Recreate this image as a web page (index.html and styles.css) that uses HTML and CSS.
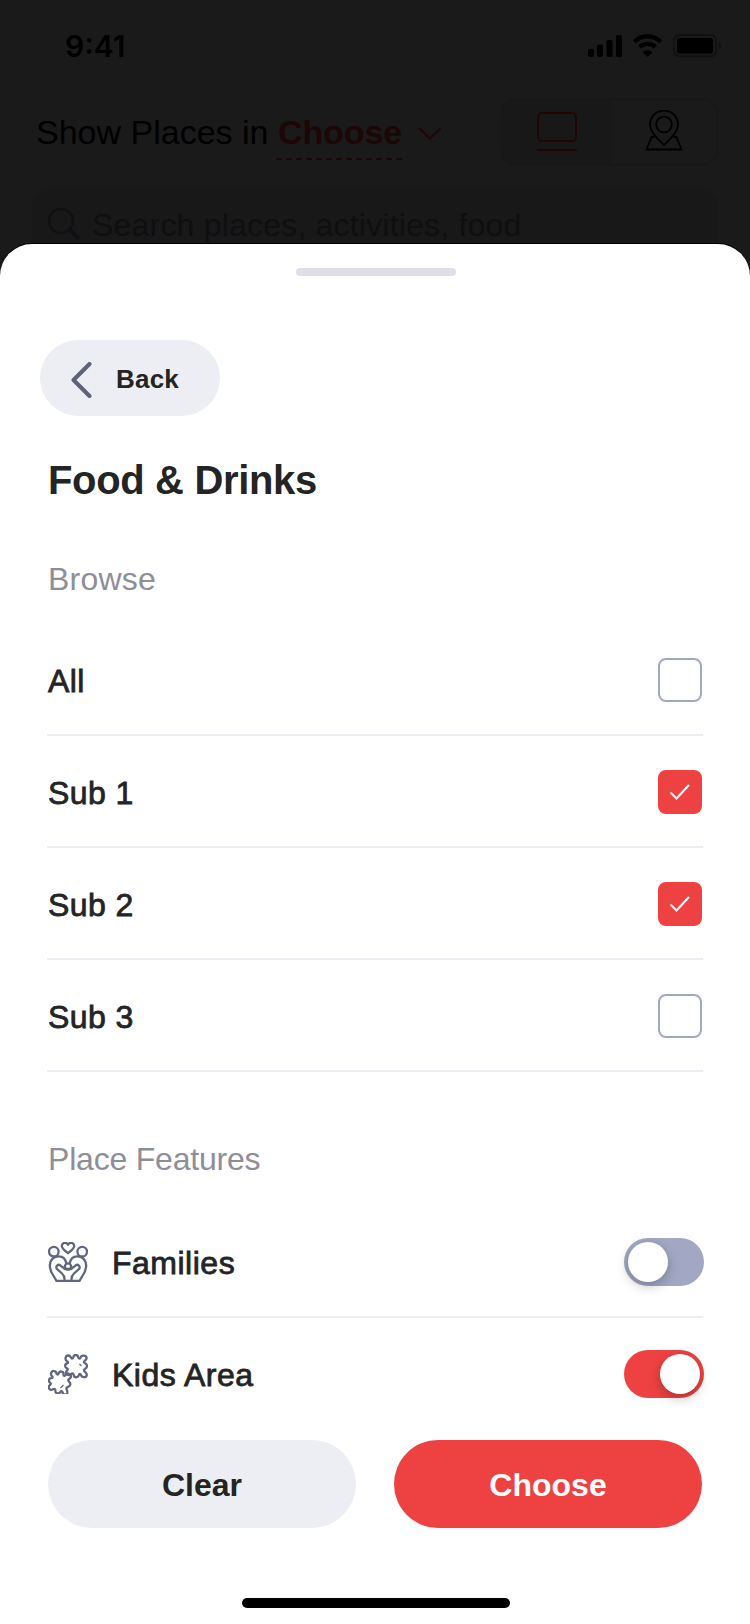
FILE: index.html
```html
<!DOCTYPE html>
<html lang="en">
<head>
<meta charset="utf-8">
<title>Food &amp; Drinks filter</title>
<link rel="stylesheet" href="styles.css">
</head>
<body>
<div class="phone">
  <header class="backdrop">
    <div class="status">
      <span class="clock">9:41</span>
      <svg class="status-icons" width="134" height="24" viewBox="0 0 134 24">
        <rect x="0" y="15" width="6" height="8" rx="1.8"/>
        <rect x="9" y="10.500" width="6" height="12.500" rx="1.800"/>
        <rect x="18.500" y="6" width="6" height="17" rx="1.800"/>
        <rect x="28" y="1" width="6" height="22" rx="1.800"/>
        <path d="M46.300 9.700a19 19 0 0 1 26.400 0M51.600 15a11.500 11.500 0 0 1 15.800 0" fill="none" stroke="#000" stroke-width="4.200" transform="translate(0 -2)"/>
        <path d="M59.500 23l-5-4.800a7.600 7.600 0 0 1 10 0z"/>
        <rect x="86" y="1" width="42" height="21.500" rx="5.500" fill="none" stroke="#111" stroke-width="2"/>
        <rect x="89" y="4" width="36" height="15.500" rx="2.500"/>
        <path d="M130.500 8c3.500 1 3.500 6.500 0 7.500z" fill="#111"/>
      </svg>
    </div>
    <div class="place-bar">
      <span class="place-text">Show Places in</span>
      <span class="place-choice">Choose
        <svg class="dashes" width="127" height="2" viewBox="0 0 127 2"><path d="M0 1h127" stroke="#1f0606" stroke-width="2" stroke-dasharray="6 4"/></svg>
      </span>
      <svg class="caret" width="24" height="14" viewBox="0 0 24 14"><path d="M2 2l10 9.500L22 2" fill="none" stroke="#1f0606" stroke-width="2" stroke-linecap="round"/></svg>
      <div class="view-switch">
        <div class="view-half view-active">
          <svg width="42" height="42" viewBox="0 0 42 42" fill="none" stroke="#1f0606" stroke-width="2"><rect x="2" y="3" width="38" height="28" rx="4"/><path d="M1 40h40"/></svg>
        </div>
        <div class="view-half">
          <svg width="38" height="42" viewBox="0 0 38 42" fill="none" stroke="#000" stroke-width="1.800"><path d="M19 35C14 29.500 5 23 5 14.500a14 14 0 0 1 28 0C33 23 24 29.500 19 35z"/><circle cx="19" cy="14.500" r="7.800"/><path d="M9.500 27H6.500L1.500 39.500h35L31.500 27h-3"/></svg>
        </div>
      </div>
    </div>
    <div class="search">
      <svg width="32" height="32" viewBox="0 0 32 32" fill="none" stroke="#0f1013"><circle cx="13" cy="13" r="12" stroke-width="2.400"/><path d="M21.500 21.500l8 8" stroke-width="4" stroke-linecap="round"/></svg>
      <span>Search places, activities, food</span>
    </div>
  </header>

  <main class="sheet">
    <div class="handle"></div>
    <div class="back">
      <svg width="22" height="36" viewBox="0 0 22 36"><path d="M18.500 2L2.500 18l16 16" fill="none" stroke="#5d6279" stroke-width="4" stroke-linecap="round" stroke-linejoin="round"/></svg>
      <span>Back</span>
    </div>
    <h1 class="title">Food &amp; Drinks</h1>
    <h2 class="label browse">Browse</h2>
    <div class="list">
      <div class="row"><span class="name">All</span><span class="box"></span></div>
      <div class="row"><span class="name">Sub 1</span><span class="box checked"><svg width="22" height="18" viewBox="0 0 22 18"><path d="M1.500 9.500l6 6L20 2" fill="none" stroke="#fff" stroke-width="2"/></svg></span></div>
      <div class="row"><span class="name">Sub 2</span><span class="box checked"><svg width="22" height="18" viewBox="0 0 22 18"><path d="M1.500 9.500l6 6L20 2" fill="none" stroke="#fff" stroke-width="2"/></svg></span></div>
      <div class="row"><span class="name">Sub 3</span><span class="box"></span></div>
    </div>
    <h2 class="label features">Place Features</h2>
    <div class="list">
      <div class="row feature">
        <svg class="icon" width="40" height="40" viewBox="0 0 40 40">
          <circle cx="5.800" cy="9.700" r="4.800"/><circle cx="34.200" cy="9.700" r="4.800"/>
          <path d="M20 11.200C16.500 8.500 13.800 6.500 13.800 4c0-3.600 4.800-4.300 6.200-1.200 1.400-3.100 6.200-2.400 6.200 1.200 0 2.500-2.700 4.500-6.200 7.200z"/>
          <path d="M18.300 21.500C17.500 17 14.500 14.300 11 14.300c-5.500 0-9.200 4-9.200 9 0 2.500.7 4.500 1.500 6.700L8.500 39h23l5.200-9c.8-2.200 1.500-4.200 1.500-6.700 0-5-3.700-9-9.200-9-3.500 0-6.500 2.700-7.300 7.200"/>
          <circle cx="20" cy="24.500" r="3.100"/>
          <path d="M16.500 39v-2c0-3-1-4.200-2.500-5.500l-5-4.500c-1.800-2.500.8-5.200 3.200-3.700L17 27h6l4.800-3.700c2.400-1.500 5 1.200 3.200 3.700l-5 4.500c-1.500 1.300-2.500 2.500-2.500 5.500v2"/>
        </svg>
        <span class="name">Families</span>
        <span class="toggle"><span class="knob"></span></span>
      </div>
      <div class="row feature">
        <svg class="icon" width="40" height="40" viewBox="0 0 40 40">
          <path d="M22.800 3.200C23.500 5.200 25 5.200 25.300 3.200C25.500 .300 30 .300 30.200 3.200C30.500 5.200 32 5.200 32.700 3.200C33.500 .600 39 1.200 38.500 4.500C38.300 6.300 36 6.500 36 8C36 9.500 39 9.200 39 12C39 14.800 36 14.500 36 16.200C36 17.800 39 18.500 38.800 20.800C38.500 24 34 23.800 33.200 21.500C32.600 19.500 31.300 19.500 30.800 21.300C30 24 26.200 23.800 25.800 21.300C25.500 19.500 24.500 19 23.200 20C20.500 22.500 16.800 20 18.500 17.200C19.800 15.500 20.500 15.200 19 14.300C16.500 13.500 16.500 10 19 9.500C20.800 9 20.300 7.800 18.800 7C16.500 5.500 17.500 1.200 20.500 1.500C22.200 1.800 22 2.400 22.800 3.200z"/>
          <path transform="translate(-16.500 16.500) rotate(12 28.500 12)" d="M22.800 3.200C23.500 5.200 25 5.200 25.300 3.200C25.500 .300 30 .300 30.200 3.200C30.500 5.200 32 5.200 32.700 3.200C33.500 .600 38 1.200 38 4.500C37.800 6.300 36 6.500 36 8C36 9.500 39 9.200 39 12C39 14.800 36 14.500 36 16.200C36 17.800 38 18.500 37.800 20.800C37.500 23.500 34 23.200 33.200 21.500C32.600 19.500 31.300 19.500 30.800 21.300C30 24 26.200 23.800 25.800 21.300C25.500 19.500 24.500 19 23.200 20C20.500 22.500 17.500 20 18.700 17.200C19.800 15.500 20.500 15.200 19 14.300C16.500 13.500 16.500 10 19 9.500C20.800 9 20.300 7.800 18.800 7C17 5.500 18 1.700 20.500 2C22.200 2 22 2.400 22.800 3.200z"/>
          <path d="M31.500 10l2 2M12.500 34l3-3" stroke-width="1.200"/>
        </svg>
        <span class="name">Kids Area</span>
        <span class="toggle on"><span class="knob"></span></span>
      </div>
    </div>
    <div class="actions">
      <div class="btn">Clear</div>
      <div class="btn primary">Choose</div>
    </div>
    <div class="home"></div>
  </main>
</div>
</body>
</html>
```
FILE: styles.css
```css
* { box-sizing: border-box; }
body { margin: 0; background: #1a1a1a; }
svg { display: block; flex: none; }
.phone {
  width: 750px;
  height: 1624px;
  overflow: hidden;
  display: flex;
  flex-direction: column;
  background: #1a1a1a;
  font-family: "Liberation Sans", Arial, sans-serif;
  color: #242424;
}
.backdrop { height: 244px; flex: none; overflow: hidden; color: #000; }
.status {
  height: 98px;
  padding: 34px 28px 0 65px;
  display: flex;
  justify-content: space-between;
}
.clock {
  font: 600 30px/24px Inter, sans-serif;
  letter-spacing: 0;
}
.place-bar {
  height: 68px;
  padding: 0 32px 0 36px;
  display: flex;
  align-items: center;
  font-size: 34px;
  line-height: 68px;
}
.place-text { width: 242px; white-space: nowrap; }
.place-choice { position: relative; width: 125px; font-weight: 700; color: #1c0606; letter-spacing: -0.1px; }
.dashes { position: absolute; left: -2px; top: 60px; }
.caret { margin: 4px 0 0 15px; }
.view-switch {
  margin-left: auto;
  width: 218px;
  height: 68px;
  display: flex;
  border: 2px solid #181818;
  border-radius: 16px;
  overflow: hidden;
}
.view-half { flex: 1; display: flex; align-items: center; justify-content: center; padding-bottom: 2px; }
.view-active { background: #181818; flex: 0 0 110px; }
.search {
  margin: 22px 32px 0;
  height: 80px;
  padding: 20px 0 0 16px;
  display: flex;
  gap: 12px;
  background: #181818;
  border-radius: 20px;
  font-size: 32px;
  line-height: 34px;
  letter-spacing: 0.2px;
  color: #0e0f11;
}
.sheet {
  flex: 1;
  display: flex;
  flex-direction: column;
  background: #fff;
  border-radius: 32px 32px 0 0;
  box-shadow: 0 -1px 0 #000;
}
.handle {
  width: 160px;
  height: 8px;
  margin: 24px 0 0 296px;
  border-radius: 4px;
  background: #dfdfe8;
  flex: none;
}
.back {
  width: 180px;
  height: 76px;
  margin: 64px 0 0 40px;
  padding: 4px 0 0 31px;
  display: flex;
  align-items: center;
  gap: 23px;
  border-radius: 38px;
  background: #edeef4;
  font-size: 26px;
  font-weight: 700;
  line-height: 32px;
  flex: none;
}
.back span { margin-top: -4px; line-height: 34px; padding-top: 2px; letter-spacing: 0.2px; }
.title { margin: 40px 0 0 48px; font-size: 40px; line-height: 48px; height: 48px; letter-spacing: -0.35px; }
.label { font-size: 32px; line-height: 40px; height: 40px; font-weight: 400; color: #8e8e99; }
.browse { margin: 55px 0 0 48px; letter-spacing: 0.2px; }
.features { margin: 67px 0 0 48px; letter-spacing: -0.2px; }
.list { margin: 0 47px; }
.browse + .list { margin-top: 25px; }
.features + .list { margin-top: 27px; }
.row {
  height: 112px;
  padding: 2px 1px 0;
  display: flex;
  align-items: center;
  justify-content: space-between;
  border-bottom: 2px solid #edeef4;
}
.name {
  font-size: 32px;
  line-height: 40px;
  padding-top: 2px;
  letter-spacing: 0.4px;
  -webkit-text-stroke: 0.8px #242424;
}
.box {
  width: 44px;
  height: 44px;
  border: 2px solid #a2a8c3;
  border-radius: 8px;
  display: flex;
  align-items: center;
  justify-content: center;
}
.checked { background: #ee4242; border-color: #ee4242; }
.feature { padding: 2px 0 0 1px; justify-content: flex-start; }
.feature:last-child { border-color: transparent; }
.feature .name { margin-left: 24px; padding-top: 2px; letter-spacing: 0.5px; }
.icon { fill: none; stroke: #61667d; stroke-width: 2.3; stroke-linejoin: round; }
.toggle {
  width: 80px;
  height: 48px;
  margin: 0 -1px 0 auto;
  padding: 4px;
  display: flex;
  border-radius: 24px;
  background: #a2a8c3;
}
.toggle.on { background: #ee4242; justify-content: flex-end; }
.knob {
  width: 40px;
  height: 40px;
  border-radius: 50%;
  background: #fff;
  box-shadow: 0 4px 12px rgba(0, 0, 0, 0.25);
}
.actions { display: flex; gap: 38px; margin: 10px 48px 0; }
.btn {
  flex: 1;
  height: 88px;
  border-radius: 44px;
  background: #edeef4;
  text-align: center;
  font-size: 32px;
  font-weight: 700;
  line-height: 90px;
}
.primary { background: #ee4242; color: #fff; }
.home { width: 268px; height: 10px; margin: 70px 0 0 242px; border-radius: 5px; background: #000; }
```
